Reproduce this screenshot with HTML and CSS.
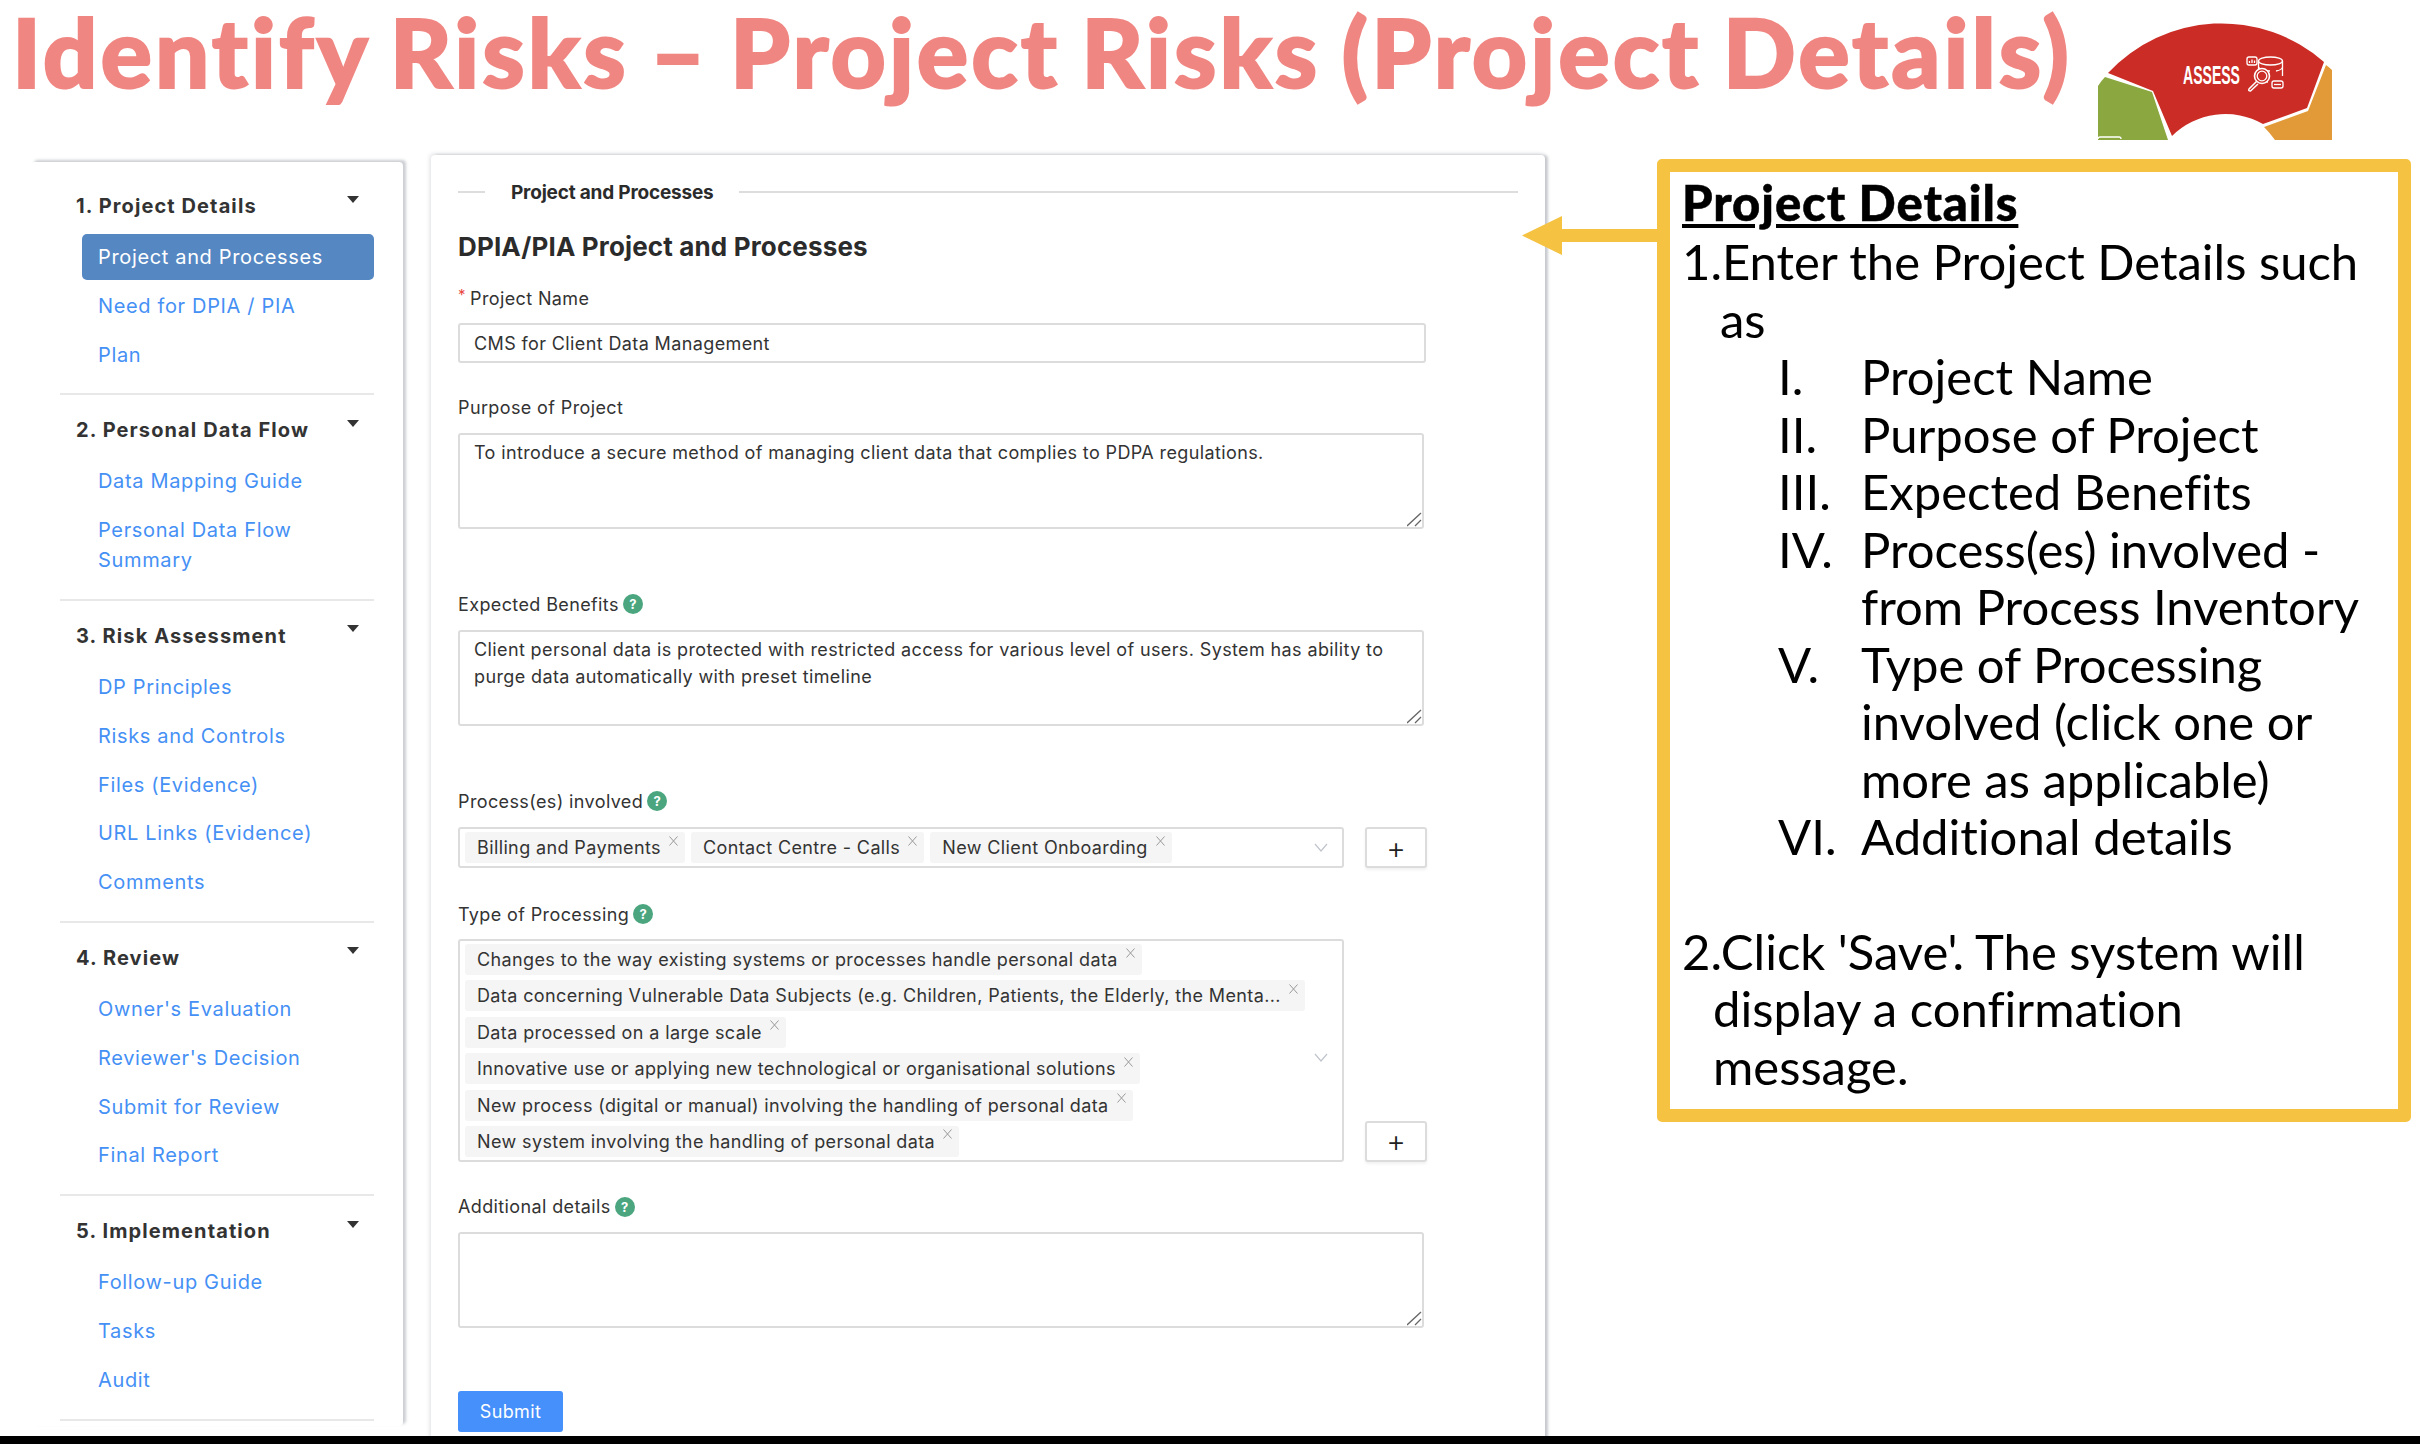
FILE: index.html
```html
<!DOCTYPE html>
<html lang="en">
<head>
  <meta charset="UTF-8">
  <title>Identify Risks - Project Details</title>
  <link rel="stylesheet" href="styles.css">
</head>
<body>
  <div class="slide">
    <header class="slide-header">
      <h1 class="slide-title">Identify Risks – Project Risks (Project Details)</h1>
      <svg class="logo" width="234" height="140" viewBox="0 0 234 140">
        <path d="M0 86 Q3 81 7 77 L54 92 L70 140 L0 140 Z" fill="#8aa83f"/>
        <path d="M228 65 Q231 67 234 70 L234 140 L177 140 Q172 133 166 127 L210 111 Z" fill="#e29a38"/>
        <path d="M10 73 A155 155 0 0 1 226 62 L209 108 L165 124 A76 76 0 0 0 74 136 L55 91 Z" fill="#cb2d26"/>
        <text x="85" y="84" class="logo-text" textLength="57" lengthAdjust="spacingAndGlyphs">ASSESS</text>
        <g fill="none" stroke="#fff" stroke-width="1.3">
          <ellipse cx="172.500" cy="61" rx="12" ry="4"/>
          <path d="M160.500 61 V78 Q161 82 170 82 M184.500 61 V76 M160.500 67 Q162 71 172 71 M160.500 73 V74 M184.500 67 Q184 70 178 71"/>
          <circle cx="164" cy="76" r="7.500" fill="#cb2d26" stroke-width="1.600"/>
          <circle cx="164" cy="76" r="4.800"/>
          <path d="M158.500 81.500 L151 89 Q150 91 152.500 91 L160 84" stroke-width="1.500"/>
          <rect x="149" y="57" width="10" height="8" rx="2" fill="#cb2d26"/>
          <path d="M151.500 63 V61 M154 63 V59.500 M156.500 63 V60.500"/>
          <rect x="174" y="81" width="11" height="7" rx="2" fill="#cb2d26"/>
          <path d="M176 84.500 H183"/>
        </g>
        <path d="M0 139 Q0 137 2 137 H21 Q23 137 23 139" fill="none" stroke="#fff" stroke-width="1.300"/>
      </svg>
    </header>

    <main class="slide-body">
      <nav class="sidebar">
        <section class="nav-group nav-group-first">
          <div class="nav-title">1. Project Details<span class="caret"></span></div>
          <a class="nav-link active">Project and Processes</a>
          <a class="nav-link">Need for DPIA / PIA</a>
          <a class="nav-link">Plan</a>
        </section>
        <section class="nav-group">
          <div class="nav-title">2. Personal Data Flow<span class="caret"></span></div>
          <a class="nav-link">Data Mapping Guide</a>
          <a class="nav-link">Personal Data Flow<br>Summary</a>
        </section>
        <section class="nav-group">
          <div class="nav-title">3. Risk Assessment<span class="caret"></span></div>
          <a class="nav-link">DP Principles</a>
          <a class="nav-link">Risks and Controls</a>
          <a class="nav-link">Files (Evidence)</a>
          <a class="nav-link">URL Links (Evidence)</a>
          <a class="nav-link">Comments</a>
        </section>
        <section class="nav-group">
          <div class="nav-title">4. Review<span class="caret"></span></div>
          <a class="nav-link">Owner's Evaluation</a>
          <a class="nav-link">Reviewer's Decision</a>
          <a class="nav-link">Submit for Review</a>
          <a class="nav-link">Final Report</a>
        </section>
        <section class="nav-group">
          <div class="nav-title">5. Implementation<span class="caret"></span></div>
          <a class="nav-link">Follow-up Guide</a>
          <a class="nav-link">Tasks</a>
          <a class="nav-link">Audit</a>
        </section>
      </nav>

      <form class="form-card">
        <div class="legend"><span>Project and Processes</span></div>
        <h2 class="form-heading">DPIA/PIA Project and Processes</h2>

        <div class="form-item form-item-name">
          <label class="field-label"><span class="required">*</span>Project Name</label>
          <input class="text-input" type="text" value="CMS for Client Data Management">
        </div>

        <div class="form-item form-item-tall">
          <label class="field-label">Purpose of Project</label>
          <textarea class="text-area">To introduce a secure method of managing client data that complies to PDPA regulations.</textarea>
        </div>

        <div class="form-item form-item-tall">
          <label class="field-label">Expected Benefits<span class="help">?</span></label>
          <textarea class="text-area">Client personal data is protected with restricted access for various level of users. System has ability to purge data automatically with preset timeline</textarea>
        </div>

        <div class="form-item form-item-process">
          <label class="field-label">Process(es) involved<span class="help">?</span></label>
          <div class="select-row">
            <div class="select-box">
              <div class="tag-list">
                <span class="tag">Billing and Payments<svg class="tag-x" viewBox="0 0 9 10"><path d="M.5 .5 L8.500 9.500 M8.500 .5 L.5 9.500"/></svg></span>
                <span class="tag">Contact Centre - Calls<svg class="tag-x" viewBox="0 0 9 10"><path d="M.5 .5 L8.500 9.500 M8.500 .5 L.5 9.500"/></svg></span>
                <span class="tag">New Client Onboarding<svg class="tag-x" viewBox="0 0 9 10"><path d="M.5 .5 L8.500 9.500 M8.500 .5 L.5 9.500"/></svg></span>
              </div>
              <svg class="chevron" viewBox="0 0 14 9"><path d="M1 1 L7 8 L13 1"/></svg>
            </div>
            <button class="add-btn" type="button">+</button>
          </div>
        </div>

        <div class="form-item">
          <label class="field-label">Type of Processing<span class="help">?</span></label>
          <div class="select-row">
            <div class="select-box">
              <div class="tag-list">
                <span class="tag">Changes to the way existing systems or processes handle personal data<svg class="tag-x" viewBox="0 0 9 10"><path d="M.5 .5 L8.500 9.500 M8.500 .5 L.5 9.500"/></svg></span>
                <span class="tag">Data concerning Vulnerable Data Subjects (e.g. Children, Patients, the Elderly, the Menta...<svg class="tag-x" viewBox="0 0 9 10"><path d="M.5 .5 L8.500 9.500 M8.500 .5 L.5 9.500"/></svg></span>
                <span class="tag">Data processed on a large scale<svg class="tag-x" viewBox="0 0 9 10"><path d="M.5 .5 L8.500 9.500 M8.500 .5 L.5 9.500"/></svg></span>
                <span class="tag">Innovative use or applying new technological or organisational solutions<svg class="tag-x" viewBox="0 0 9 10"><path d="M.5 .5 L8.500 9.500 M8.500 .5 L.5 9.500"/></svg></span>
                <span class="tag">New process (digital or manual) involving the handling of personal data<svg class="tag-x" viewBox="0 0 9 10"><path d="M.5 .5 L8.500 9.500 M8.500 .5 L.5 9.500"/></svg></span>
                <span class="tag">New system involving the handling of personal data<svg class="tag-x" viewBox="0 0 9 10"><path d="M.5 .5 L8.500 9.500 M8.500 .5 L.5 9.500"/></svg></span>
              </div>
              <svg class="chevron chevron-low" viewBox="0 0 14 9"><path d="M1 1 L7 8 L13 1"/></svg>
            </div>
            <button class="add-btn" type="button">+</button>
          </div>
        </div>

        <div class="form-item form-item-last">
          <label class="field-label">Additional details<span class="help">?</span></label>
          <textarea class="text-area"></textarea>
        </div>

        <button class="submit-btn" type="button">Submit</button>
      </form>

      <aside class="callout">
        <h3 class="callout-title">Project Details</h3>
        <p class="step step-one">1.Enter the Project Details such as</p>
        <ol class="roman-list">
          <li><span>I.</span><span>Project Name</span></li>
          <li><span>II.</span><span>Purpose of Project</span></li>
          <li><span>III.</span><span>Expected Benefits</span></li>
          <li><span>IV.</span><span>Process(es) involved - from Process Inventory</span></li>
          <li><span>V.</span><span>Type of Processing involved (click one or more as applicable)</span></li>
          <li><span>VI.</span><span>Additional details</span></li>
        </ol>
        <p class="step step-two">2.Click 'Save'. The system will display a confirmation message.</p>
      </aside>

      <svg class="arrow" width="135" height="39" viewBox="0 0 135 39">
        <path d="M0 19.500 L40 0 V13 H135 V26 H40 V39 Z" fill="#f5c242"/>
      </svg>
    </main>

    <div class="bottom-bar"></div>
  </div>
</body>
</html>
```

FILE: styles.css
```css
* {
  box-sizing: border-box;
}

body {
  margin: 0;
  background: #fff;
  font-family: Inter, "Noto Sans", sans-serif;
}

.slide {
  position: relative;
  display: flex;
  flex-direction: column;
  width: 2420px;
  height: 1444px;
  overflow: hidden;
}

/* title row */
.slide-header {
  display: flex;
  justify-content: space-between;
  height: 155px;
  padding: 0 88px 0 12px;
}

.slide-title {
  margin: 0;
  font-family: Lato, sans-serif;
  font-size: 96px;
  font-weight: 900;
  line-height: 102px;
  letter-spacing: 3px;
  word-spacing: -4.500px;
  font-variant-ligatures: none;
  -webkit-text-stroke: 2px #f08682;
  color: #f08682;
  white-space: nowrap;
}

.logo-text {
  font-family: "Liberation Sans", sans-serif;
  font-size: 25px;
  font-weight: 700;
  fill: #fff;
}

.slide-body {
  flex: 1;
  display: flex;
  align-items: flex-start;
  min-height: 0;
}

.bottom-bar {
  height: 8px;
  background: #000;
}

/* left menu */
.sidebar {
  width: 372px;
  height: 1264px;
  margin: 7px 0 0 31px;
  padding: 0 29px;
  overflow: hidden;
  border-radius: 4px;
  box-shadow: 3px -2px 3px rgba(70, 80, 95, 0.28);
}

.nav-group {
  padding: 12px 0 13px;
  border-bottom: 2px solid #e8e8e8;
}

.nav-group-first {
  padding-top: 21px;
}

.nav-title {
  display: flex;
  align-items: center;
  justify-content: space-between;
  height: 46px;
  margin-bottom: 5px;
  padding: 0 15px 0 16px;
  font-size: 20px;
  font-weight: 700;
  letter-spacing: 1.100px;
  color: #333;
}

.caret {
  width: 0;
  height: 0;
  margin-top: -14px;
  border-left: 6px solid transparent;
  border-right: 6px solid transparent;
  border-top: 7px solid #333;
}

.nav-link {
  display: block;
  margin: 0 0 2.800px 22px;
  padding: 8px 16px;
  border-radius: 5px;
  font-size: 20px;
  line-height: 30px;
  letter-spacing: 0.650px;
  color: #4590f5;
}

.nav-link.active {
  background: #5587c3;
  color: #fff;
}

/* form */
.form-card {
  width: 1114px;
  height: 1290px;
  margin-left: 28px;
  padding: 25px 27px 0;
  border-radius: 4px;
  box-shadow: -1px -1px 4px rgba(70, 80, 95, 0.18), 3px 0 3px rgba(70, 80, 95, 0.28);
}

.legend {
  display: flex;
  align-items: center;
  height: 24px;
  font-size: 19px;
  font-weight: 700;
  letter-spacing: -0.200px;
  color: #2b2b2b;
}

.legend::before,
.legend::after {
  content: "";
  height: 2px;
  background: #ddd;
}

.legend::before {
  width: 27px;
}

.legend::after {
  flex: 1;
}

.legend span {
  padding: 0 26px;
}

.form-heading {
  margin: 25px 0 0;
  font-size: 26px;
  line-height: 36px;
  font-weight: 700;
  letter-spacing: 0.150px;
  color: #2b2b2b;
}

.form-item {
  margin-bottom: 33px;
}

.form-item-name {
  margin-bottom: 32px;
}

.form-item-tall {
  margin-bottom: 63px;
}

.form-item-process {
  margin-bottom: 34px;
}

.form-item-last {
  margin-bottom: 63px;
}

.form-heading + .form-item {
  margin-top: 21px;
}

.field-label {
  display: flex;
  align-items: center;
  height: 24px;
  margin-bottom: 13px;
  font-size: 18px;
  letter-spacing: 0.380px;
  color: #333;
}

.form-item-tall .field-label,
.form-item-process .field-label {
  margin-bottom: 14px;
}

.required {
  width: 12px;
  margin-top: -8px;
  font-size: 15px;
  color: #e8483f;
}

.help {
  width: 20px;
  height: 20px;
  margin-left: 4px;
  border-radius: 50%;
  background: #4ba67f;
  font-size: 13px;
  font-weight: 700;
  line-height: 20px;
  letter-spacing: 0;
  text-align: center;
  color: #fff;
}

.text-input {
  display: block;
  width: 968px;
  height: 40px;
  padding: 0 14px;
  border: 2px solid #dcdcdc;
  border-radius: 3px;
  font: 18px Inter, sans-serif;
  letter-spacing: 0.380px;
  color: #333;
}

.text-area {
  display: block;
  width: 966px;
  height: 96px;
  padding: 4px 14px;
  border: 2px solid #dcdcdc;
  border-radius: 3px;
  font: 18px/27px Inter, sans-serif;
  letter-spacing: 0.380px;
  color: #333;
}

.text-area::-webkit-resizer {
  background: url("data:image/svg+xml,%3Csvg xmlns='http://www.w3.org/2000/svg' width='15' height='15'%3E%3Cpath d='M0 14 L14 1 M8 14 L14 8' stroke='%23666' stroke-width='1.300' fill='none'/%3E%3C/svg%3E") no-repeat;
}

.select-row {
  display: flex;
  align-items: flex-end;
  gap: 21px;
}

.select-box {
  display: flex;
  align-items: center;
  width: 886px;
  min-height: 41px;
  padding: 3px 14px 3px 5px;
  border: 2px solid #dcdcdc;
  border-radius: 3px;
}

.tag-list {
  flex: 1;
  display: flex;
  flex-wrap: wrap;
  gap: 5.400px 6px;
}

.tag {
  display: flex;
  align-items: center;
  height: 31px;
  padding: 0 7px 0 12px;
  border-radius: 3px;
  background: #f5f5f5;
  font-size: 18px;
  letter-spacing: 0.380px;
  color: #333;
  white-space: nowrap;
}

.tag-x {
  width: 9px;
  height: 10px;
  margin: -14px 0 0 8px;
  fill: none;
  stroke: #999;
}

.chevron {
  width: 14px;
  height: 9px;
  fill: none;
  stroke: #c0c4cc;
  stroke-width: 1.200;
}

.chevron-low {
  margin-top: 14px;
}

.add-btn {
  width: 62px;
  height: 41px;
  padding: 0;
  border: 2px solid #dcdcdc;
  border-radius: 3px;
  background: #fff;
  font: 300 30px/36px Inter, sans-serif;
  color: #222;
  box-shadow: 0 2px 3px rgba(0, 0, 0, 0.06);
}

.submit-btn {
  display: block;
  width: 105px;
  height: 41px;
  padding: 0;
  border: 0;
  border-radius: 3px;
  background: #4590fa;
  font: 18px Inter, sans-serif;
  letter-spacing: 0.380px;
  color: #fff;
}

/* annotation on the right */
.callout {
  width: 754px;
  height: 963px;
  margin: 4px 0 0 112px;
  padding: 0 12px 0 12px;
  border: 13px solid #f5c242;
  border-radius: 5px;
  font-family: Lato, sans-serif;
  font-size: 49px;
  font-variant-ligatures: none;
  line-height: 57.500px;
  color: #000;
}

.callout-title {
  margin: 0;
  font-size: 49px;
  font-weight: 900;
  line-height: 61px;
  letter-spacing: 0.900px;
  -webkit-text-stroke: 0.500px #000;
  text-decoration: underline;
}

.step {
  margin: 0;
}

.step-one {
  padding-left: 38px;
  text-indent: -38px;
}

.step-two {
  margin-top: 57px;
  padding-left: 31px;
  text-indent: -31px;
}

.roman-list {
  margin: 0;
  padding: 0 0 0 96px;
  list-style: none;
}

.roman-list li {
  display: grid;
  grid-template-columns: 83px 1fr;
}

/* pointer from the annotation to the form */
.arrow {
  position: absolute;
  left: 1522px;
  top: 216px;
}
```
